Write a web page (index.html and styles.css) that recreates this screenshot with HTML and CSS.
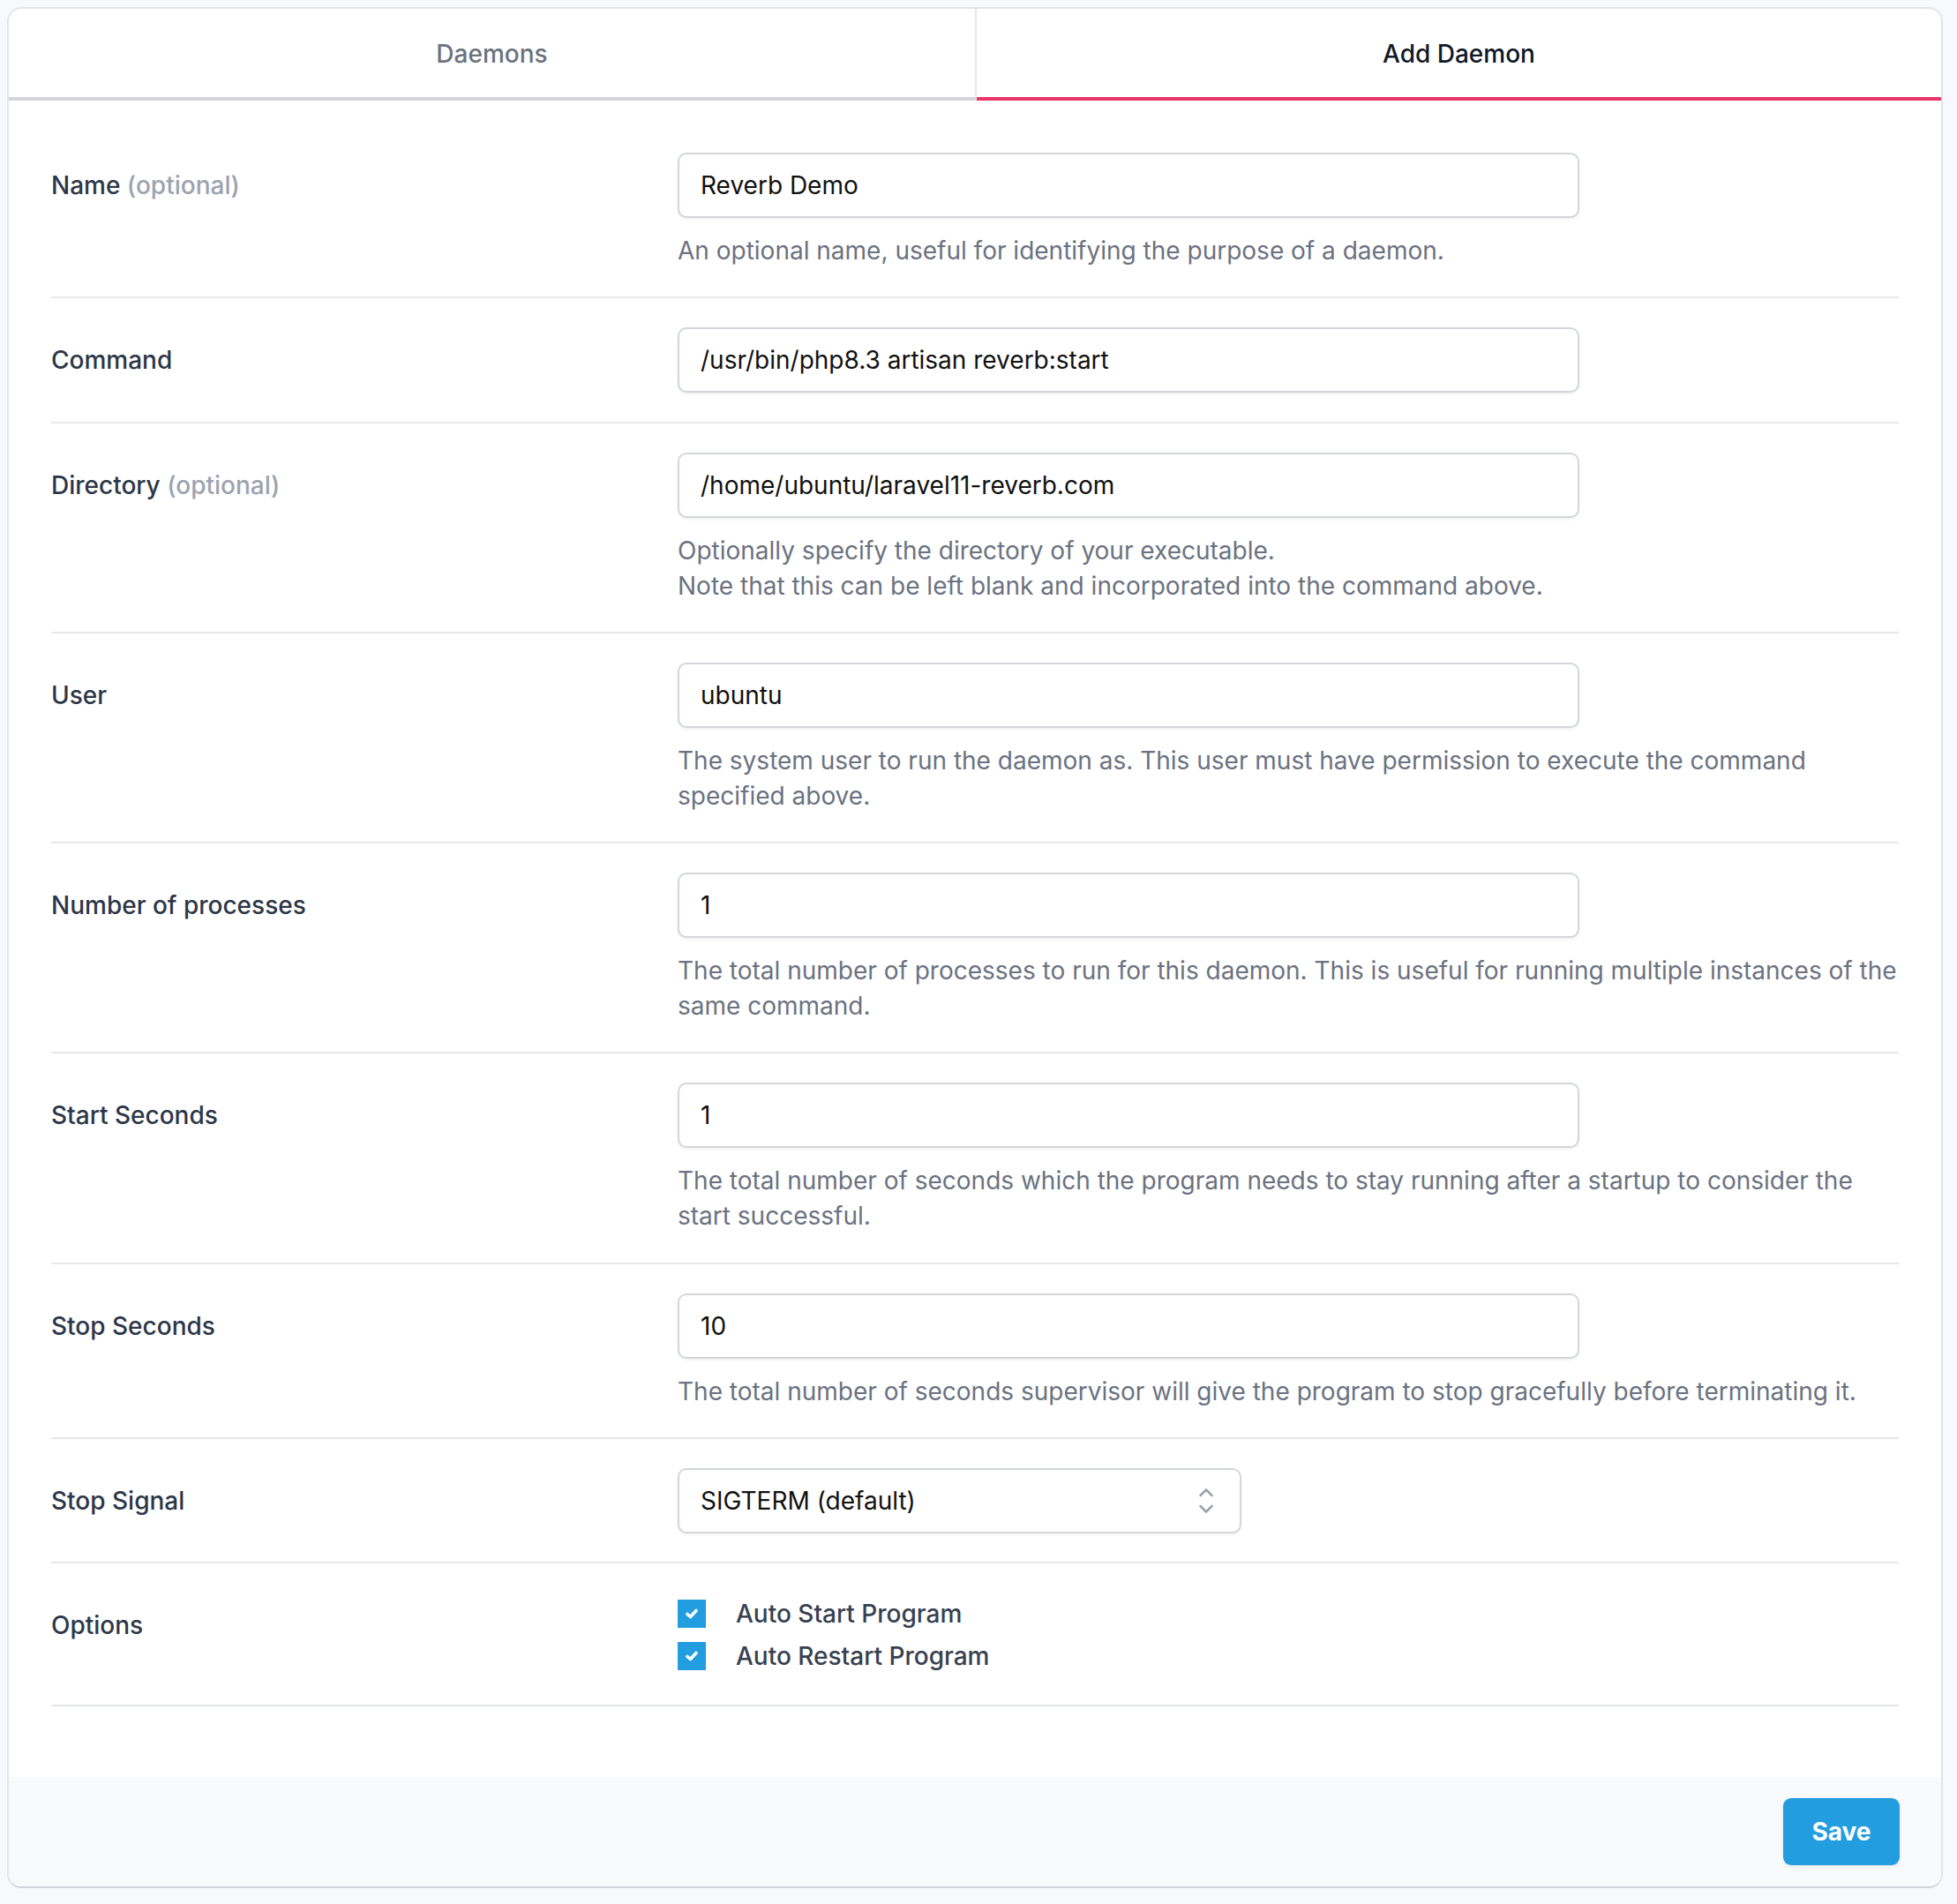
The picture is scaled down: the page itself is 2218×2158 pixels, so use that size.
FILE: index.html
```
<!DOCTYPE html>
<html lang="en">
<head>
    <meta charset="UTF-8">
    <title>Add Daemon</title>
    <link rel="stylesheet" href="styles.css">
</head>
<body>

    <div class="card">
        <!-- Tabs -->
        <div class="tabs">
            <div class="tab">Daemons</div>
            <div class="tab active">Add Daemon</div>
        </div>

        <form class="form-body">
            <div class="row">
                <label class="label">Name <span class="optional">(optional)</span></label>
                <div class="field">
                    <input class="text-input" type="text" value="Reverb Demo">
                    <p class="help">An optional name, useful for identifying the purpose of a daemon.</p>
                </div>
            </div>

            <div class="row">
                <label class="label">Command</label>
                <div class="field">
                    <input class="text-input" type="text" value="/usr/bin/php8.3 artisan reverb:start">
                </div>
            </div>

            <div class="row">
                <label class="label">Directory <span class="optional">(optional)</span></label>
                <div class="field">
                    <input class="text-input" type="text" value="/home/ubuntu/laravel11-reverb.com">
                    <p class="help">Optionally specify the directory of your executable.<br>Note that this can be left blank and incorporated into the command above.</p>
                </div>
            </div>

            <div class="row">
                <label class="label">User</label>
                <div class="field">
                    <input class="text-input" type="text" value="ubuntu">
                    <p class="help">The system user to run the daemon as. This user must have permission to execute the command specified above.</p>
                </div>
            </div>

            <div class="row">
                <label class="label">Number of processes</label>
                <div class="field">
                    <input class="text-input" type="text" value="1">
                    <p class="help">The total number of processes to run for this daemon. This is useful for running multiple instances of the same command.</p>
                </div>
            </div>

            <div class="row">
                <label class="label">Start Seconds</label>
                <div class="field">
                    <input class="text-input" type="text" value="1">
                    <p class="help">The total number of seconds which the program needs to stay running after a startup to consider the start successful.</p>
                </div>
            </div>

            <div class="row">
                <label class="label">Stop Seconds</label>
                <div class="field">
                    <input class="text-input" type="text" value="10">
                    <p class="help">The total number of seconds supervisor will give the program to stop gracefully before terminating it.</p>
                </div>
            </div>

            <div class="row">
                <label class="label">Stop Signal</label>
                <div class="field">
                    <div class="select-wrap">
                        <select class="select">
                            <option>SIGTERM (default)</option>
                        </select>
                        <svg class="select-icon" width="18" height="30" viewBox="0 0 18 30" fill="none" stroke="#9ca3af" stroke-width="2.6" stroke-linecap="round" stroke-linejoin="round">
                            <path d="M2.5 9 L9 2.5 L15.5 9"/>
                            <path d="M2.5 21 L9 27.5 L15.5 21"/>
                        </svg>
                    </div>
                </div>
            </div>

            <div class="row options">
                <label class="label">Options</label>
                <div class="field">
                    <div class="check-row">
                        <span class="checkbox"><svg width="20" height="20" viewBox="0 0 20 20" fill="none" stroke="#fff" stroke-width="3.6" stroke-linecap="round" stroke-linejoin="round"><path d="M5 10.5 L8.5 13.5 L15 6.5"/></svg></span>
                        <span class="check-label">Auto Start Program</span>
                    </div>
                    <div class="check-row">
                        <span class="checkbox"><svg width="20" height="20" viewBox="0 0 20 20" fill="none" stroke="#fff" stroke-width="3.6" stroke-linecap="round" stroke-linejoin="round"><path d="M5 10.5 L8.5 13.5 L15 6.5"/></svg></span>
                        <span class="check-label">Auto Restart Program</span>
                    </div>
                </div>
            </div>
        </form>

        <div class="card-footer">
            <button class="btn-save" type="button">Save</button>
        </div>
    </div>

</body>
</html>
```

FILE: styles.css
```
body {
    margin: 0;
    padding: 8px 16px 18px 8px;
    background-color: #f8f9fc;
    font-family: 'Inter', 'Noto Sans', sans-serif;
    color: #374151;
}

.card {
    background: #fff;
    border: 2px solid #e2e4ea;
    border-bottom-color: #d1d4dc;
    border-radius: 16px;
    overflow: hidden;
}

/* Tabs */
.tabs {
    display: grid;
    grid-template-columns: 1097px 1fr;
}

.tab {
    height: 104px;
    padding-top: 2px;
    box-sizing: border-box;
    display: flex;
    align-items: center;
    justify-content: center;
    font-size: 28px;
    font-weight: 500;
    color: #6b7280;
    border-bottom: 4px solid #d2d6dc;
}

.tab:first-child {
    border-right: 2px solid #e5e7eb;
}

.tab.active {
    color: #111827;
    border-bottom-color: #e8356b;
}

/* Form rows */
.form-body {
    margin: 0;
    padding: 26px 48px 80px 48px;
}

.row {
    display: grid;
    grid-template-columns: 710px 1fr;
    padding: 33px 0 32.25px;
    border-bottom: 2px solid #e5e7eb;
}

.row.options {
    padding-bottom: 31px;
}

.label {
    padding-top: 17px;
    font-size: 28px;
    line-height: 40px;
    font-weight: 500;
    color: #2d3748;
}

.optional {
    color: #9ca3af;
}

.text-input,
.select {
    box-sizing: border-box;
    display: block;
    width: 1022px;
    height: 74px;
    margin: 0;
    padding: 0 24px;
    border: 2px solid #d2d6dc;
    border-radius: 10px;
    background: #fff;
    box-shadow: 0 2px 3px rgba(0, 0, 0, 0.05);
    font-family: 'Inter', 'Noto Sans', sans-serif;
    font-size: 28px;
    color: #111;
    outline: none;
}

.help {
    margin: 17px 0 0;
    font-size: 28px;
    line-height: 40px;
    color: #6b7280;
}

/* Select */
.select-wrap {
    position: relative;
    width: 639px;
}

.select {
    width: 100%;
    appearance: none;
    -webkit-appearance: none;
}

.select-icon {
    position: absolute;
    right: 31px;
    top: 22px;
}

/* Checkboxes */
.check-row {
    display: flex;
    align-items: center;
    height: 48px;
}

.checkbox {
    width: 32px;
    height: 32px;
    background: #229ee0;
    display: flex;
    align-items: center;
    justify-content: center;
    margin-right: 34px;
}

.check-label {
    font-size: 28px;
    font-weight: 500;
    color: #374151;
}

/* Footer */
.card-footer {
    background: #f9fafb;
    display: flex;
    justify-content: flex-end;
    padding: 24px 47px 24px 0;
}

.btn-save {
    width: 132px;
    height: 76px;
    border: none;
    border-radius: 9px;
    background: #229de0;
    color: #fff;
    font-family: 'Inter', 'Noto Sans', sans-serif;
    font-size: 28px;
    font-weight: 700;
    box-shadow: 0 2px 4px rgba(0, 0, 0, 0.08);
}
```
